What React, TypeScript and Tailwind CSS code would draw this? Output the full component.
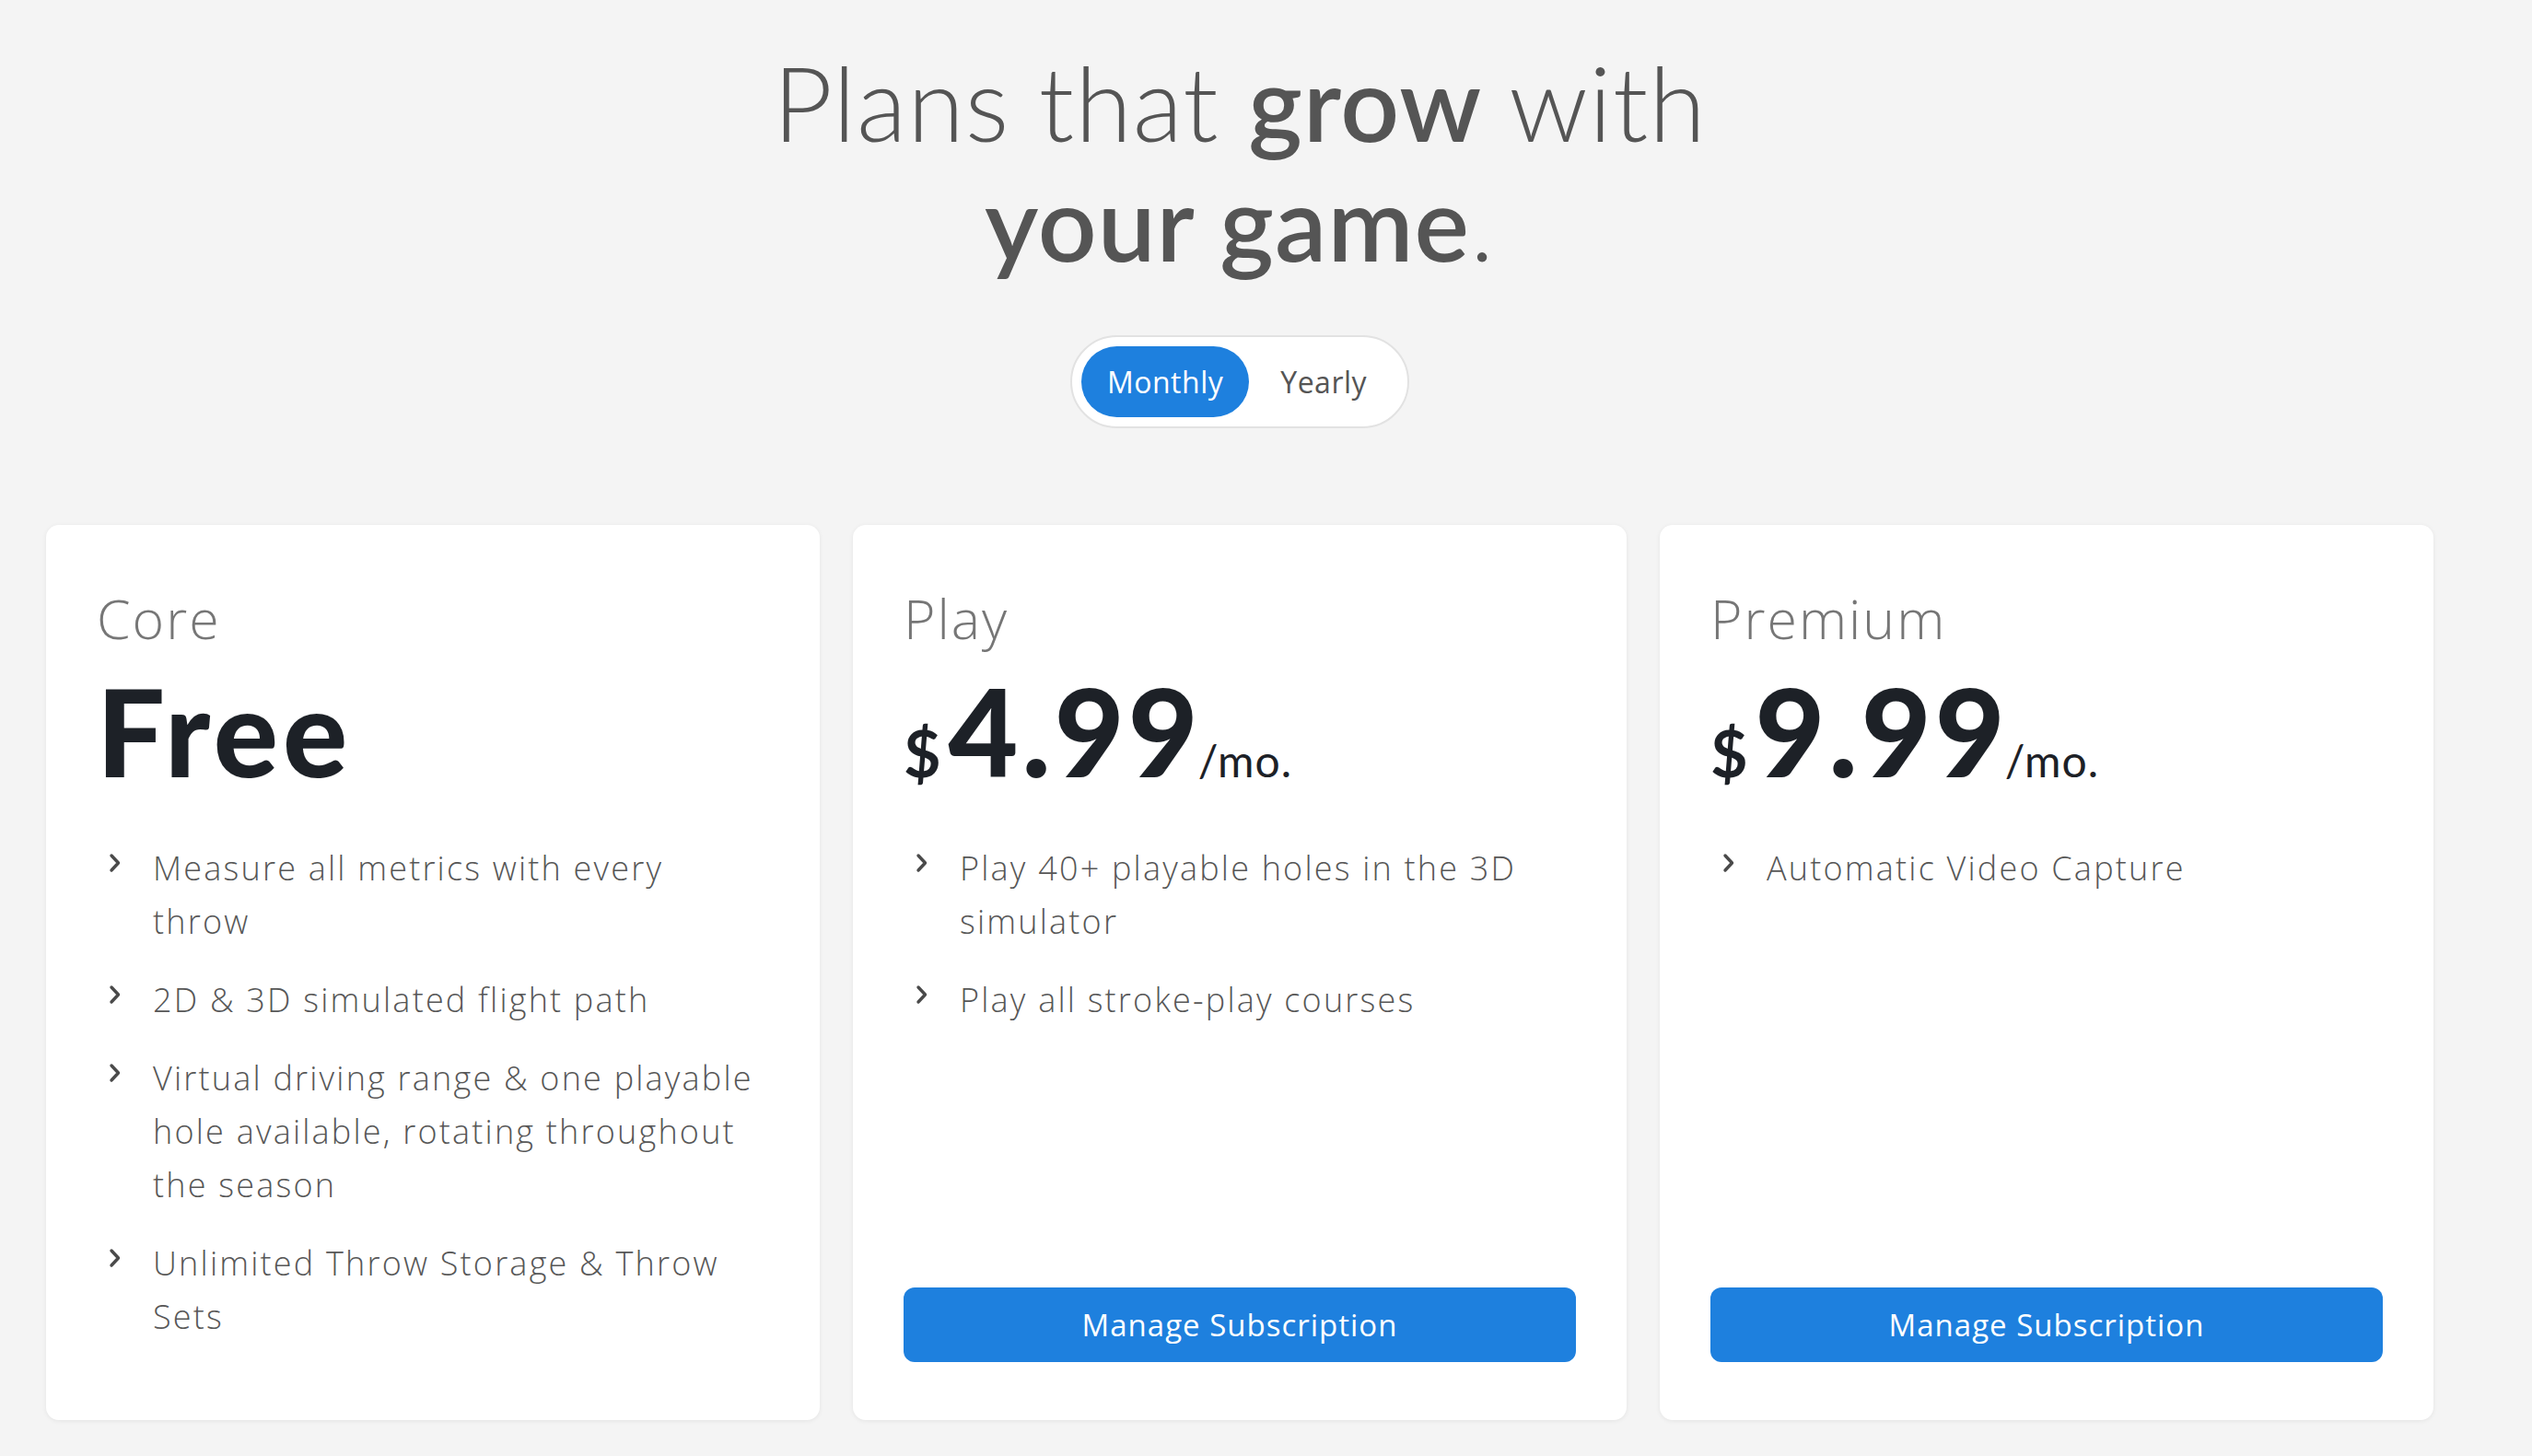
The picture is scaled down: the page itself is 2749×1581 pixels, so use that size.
type Plan = {
  name: string
  price?: string
  features: string[]
  manage: boolean
}

const PLANS: Plan[] = [
  {
    name: 'Core',
    features: [
      'Measure all metrics with every throw',
      '2D & 3D simulated flight path',
      'Virtual driving range & one playable hole available, rotating throughout the season',
      'Unlimited Throw Storage & Throw Sets',
    ],
    manage: false,
  },
  {
    name: 'Play',
    price: '4.99',
    features: ['Play 40+ playable holes in the 3D simulator', 'Play all stroke-play courses'],
    manage: true,
  },
  {
    name: 'Premium',
    price: '9.99',
    features: ['Automatic Video Capture'],
    manage: true,
  },
]

function Chevron() {
  return (
    <svg viewBox="0 0 14 22" className="mt-[12px] h-[22px] w-[14px] shrink-0 text-[#4a4a4a]" fill="none" stroke="currentColor" strokeWidth={3.4}>
      <path d="M3 3l7.5 8L3 19" strokeLinecap="round" strokeLinejoin="round" />
    </svg>
  )
}

function PlanCard({ plan }: { plan: Plan }) {
  return (
    <div className="flex flex-col rounded-[14px] bg-white px-[55px] pt-[66px] pb-[63px] shadow-[0_1px_5px_rgba(0,0,0,0.07)]">
      <h2 className="font-['Open_Sans',sans-serif] text-[59px] leading-[70px] font-light tracking-[2px] text-[#767676]">
        {plan.name}
      </h2>

      <div className="mt-[22px] flex items-baseline text-[#1d2127]">
        {plan.price ? (
          <>
            <span className="mr-[8px] text-[70px] leading-none font-bold">$</span>
            <span className="text-[131px] leading-none font-black tracking-[4px]">{plan.price}</span>
            <span className="-ml-[4px] text-[48px] leading-none font-normal tracking-[1px]">/mo.</span>
          </>
        ) : (
          <span className="text-[131px] leading-none font-black tracking-[5px]">Free</span>
        )}
      </div>

      <ul className="mt-[55px] mb-[20px] space-y-[27px] pl-[13px]">
        {plan.features.map(f => (
          <li key={f} className="flex items-start gap-[34px]">
            <Chevron />
            <span className="font-['Open_Sans',sans-serif] text-[36px] leading-[58px] font-light tracking-[2.2px] text-[#575757]">
              {f}
            </span>
          </li>
        ))}
      </ul>

      {plan.manage && (
        <button className="mt-auto h-[81px] w-full rounded-[12px] bg-[#1e80de] font-['Open_Sans',sans-serif] text-[33px] font-normal tracking-[1px] text-white">
          Manage Subscription
        </button>
      )}
    </div>
  )
}

export default function App() {
  return (
    <div className="min-h-screen bg-[#f4f4f4] font-['Lato',sans-serif]">
      <div className="w-[2692px] px-[50px] pt-[46px] pb-[38px]">
        <h1 className="mx-auto max-w-[1200px] text-center text-[112px] leading-[130px] font-light tracking-[1px] text-[#555]">
          Plans that <span className="font-semibold">grow</span> with
          <br />
          <span className="font-semibold">your game</span>.
        </h1>

        <div className="mx-auto mt-[58px] flex w-fit items-center rounded-full border-2 border-[#e2e2e2] bg-white p-[10px] font-['Open_Sans',sans-serif]">
          <button className="h-[77px] rounded-full bg-[#1e80de] px-[28px] text-[32px] tracking-[0.5px] text-white">Monthly</button>
          <button className="h-[77px] px-[34px] text-[32px] tracking-[0.5px] text-[#555]">Yearly</button>
        </div>

        <div className="mt-[105px] grid grid-cols-3 gap-[36px]">
          {PLANS.map(p => (
            <PlanCard key={p.name} plan={p} />
          ))}
        </div>
      </div>
    </div>
  )
}
